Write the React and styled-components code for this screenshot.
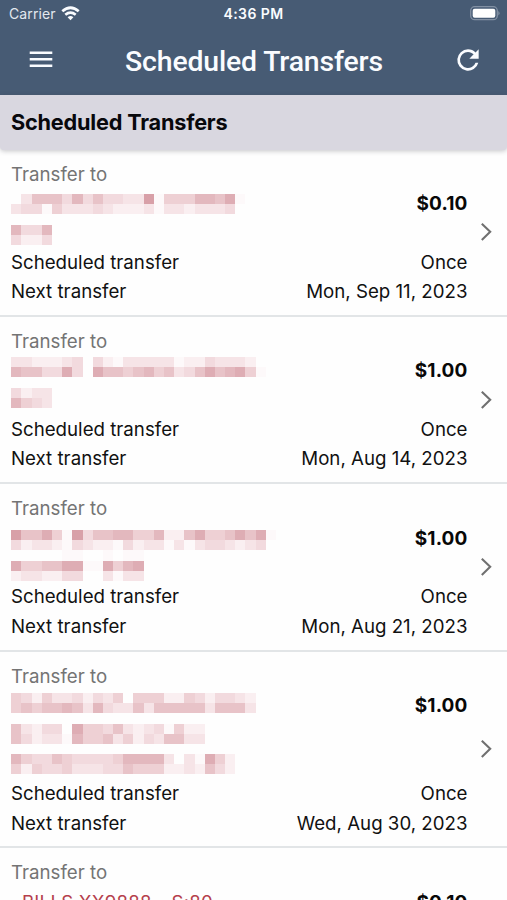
import React from "react";
import styled, { createGlobalStyle } from "styled-components";

const GlobalStyle = createGlobalStyle`
  * { box-sizing: border-box; }
  html, body { margin: 0; padding: 0; background: #fefefe; overflow: hidden; }
  body { font-family: Inter, "Liberation Sans", sans-serif; color: #111; }
`;

const Screen = styled.div`
  width: 507px;
  height: 900px;
  overflow: hidden;
  background: #fefefe;
`;

const Header = styled.header`
  height: 95px;
  background: #475b74;
  color: #fafcff;
`;

const StatusBar = styled.div`
  height: 27px;
  padding: 0 7px 0 9px;
  display: grid;
  grid-template-columns: 1fr auto 1fr;
  align-items: center;
`;

const Carrier = styled.div`
  display: flex;
  align-items: center;
  gap: 5px;
  font-size: 14px;
  letter-spacing: 0.1px;
  color: #e3e8ef;
`;

const Clock = styled.div`
  margin-right: 2px;
  font-size: 14px;
  font-weight: 600;
  letter-spacing: 0.4px;
`;

const BatterySlot = styled.div`
  display: flex;
  justify-content: flex-end;
`;

const TitleBar = styled.div`
  height: 66px;
  display: grid;
  grid-template-columns: 81px 1fr 78px;
  align-items: start;
`;

const IconButton = styled.button`
  border: 0;
  padding: 0;
  background: none;
  height: 66px;
  display: flex;
  align-items: center;
  justify-content: center;
  color: inherit;
`;

const Title = styled.h1`
  margin: 0 2px 0 0;
  text-align: center;
  font: 500 28.4px/70px Roboto, sans-serif;
  letter-spacing: -0.15px;
  white-space: nowrap;
`;

const SectionHeading = styled.h2`
  position: relative;
  margin: 0;
  height: 54.5px;
  padding-left: 11px;
  background: #d9d7e0;
  border-radius: 0 0 4px 4px;
  box-shadow: 0 1px 5px rgba(60, 60, 70, 0.3);
  font-size: 21.7px;
  line-height: 55px;
  font-weight: 700;
  letter-spacing: -0.2px;
  color: #08080c;
`;

const Row = styled.article`
  display: grid;
  grid-template-columns: 1fr 39.5px;
  align-items: center;
  padding: 10px 0 8.4px 11px;
  border-bottom: 2px solid #e2e5e7;
`;

const Line = styled.div`
  display: flex;
  justify-content: space-between;
  height: 29.4px;
  font-size: 18.7px;
  line-height: 29.4px;
  white-space: nowrap;
`;

const Caption = styled(Line)`
  color: #747474;
`;

const PayeeBlock = styled.div`
  display: flex;
  justify-content: space-between;
  align-items: flex-start;
  height: ${(p) => p.$lines * 29.4}px;
  line-height: 29.4px;
`;

const Payee = styled.span`
  font-size: 18.6px;
  letter-spacing: 0.25px;
  color: #b5404c;
  white-space: pre;
`;

const Amount = styled.strong`
  font-size: 19px;
  font-weight: 700;
  letter-spacing: 0.15px;
  color: #080808;
`;

const MosaicSvg = styled.svg`
  display: block;
  overflow: visible;
  margin-top: ${(p) => p.$top}px;
`;

const Chevron = styled.svg`
  display: block;
  margin: -1.6px 0 0 12px;
`;

const shades = ["none", "#fdf9fa", "#faeff1", "#f6e4e7", "#f2dade", "#eed0d4", "#e8c3c8", "#e3b8be", "#deadb4", "#d8a0a8"];
const cell = 10.18;

function Mosaic({ rows, top }) {
  return (
    <MosaicSvg $top={top} width="260" height="20" shapeRendering="crispEdges" aria-hidden="true">
      {rows.flatMap((row, y) =>
        [...row].map((level, x) =>
          level === "0" ? null : (
            <rect key={`${x}-${y}`} x={0.3 + x * cell} y={y * cell} width={cell} height={cell} fill={shades[+level]} />
          )
        )
      )}
    </MosaicSvg>
  );
}

const transfers = [
  {
    amount: "$0.10", date: "Mon, Sep 11, 2023", lines: 2, top: 5.1,
    mosaic: ["03666474644339155577681", "3441533343222313323334", "0", "7447", "4224"],
  },
  {
    amount: "$1.00", date: "Mon, Aug 14, 2023", lines: 2, top: 1,
    mosaic: ["332223404213333312243332", "7664484086656756346867851", "0", "4233", "7543"],
  },
  {
    amount: "$1.00", date: "Mon, Aug 21, 2023", lines: 2, top: 6.7,
    mosaic: ["96685194667755722685568681", "4233214322142331313443234", "0000011001011", "8556688118578", "2332244003133"],
  },
  {
    amount: "$1.00", date: "Wed, Aug 30, 2023", lines: 3, top: 2.2,
    mosaic: ["542533424350555225424432", "565667637433636666636663", "0", "6324408554632341522", "6423317556352436633", "0", "7544654444577773031852", "5254453334465552232642"],
  },
  { amount: "$0.10", date: "Fri, Sep 1, 2023", lines: 2, payee: "  BILLS XX9888 - S:80" },
];

function Transfer({ item }) {
  return (
    <Row>
      <div>
        <Caption>Transfer to</Caption>
        <PayeeBlock $lines={item.lines}>
          {item.payee ? <Payee>{item.payee}</Payee> : <Mosaic rows={item.mosaic} top={item.top} />}
          <Amount>{item.amount}</Amount>
        </PayeeBlock>
        <Line><span>Scheduled transfer</span><span>Once</span></Line>
        <Line><span>Next transfer</span><span>{item.date}</span></Line>
      </div>
      <Chevron width="14" height="20" viewBox="0 0 14 20" fill="none" stroke="#707070" strokeWidth="2.1">
        <path d="M1.8 1.7 10.2 9.8 1.8 18" />
      </Chevron>
    </Row>
  );
}

export default function App() {
  return (
    <Screen>
      <GlobalStyle />
      <Header>
        <StatusBar>
          <Carrier>
            Carrier
            <svg width="19" height="15" viewBox="0 0 19 15" fill="none" stroke="#fafcff" strokeWidth="2.7">
              <path d="M1.3 5.3Q9.5-1.8 17.7 5.3" />
              <path d="M4.3 8.7Q9.5 4.5 14.7 8.7" />
              <path d="M6.6 11.2Q9.5 8.8 12.4 11.2L9.5 14.2Z" fill="#fafcff" stroke="none" />
            </svg>
          </Carrier>
          <Clock>4:36 PM</Clock>
          <BatterySlot>
            <svg width="30" height="15" viewBox="0 0 30 15">
              <rect x=".7" y=".7" width="26.6" height="13" rx="4" fill="none" stroke="#8290a3" strokeWidth="1.3" />
              <rect x="2.7" y="2.7" width="22.6" height="9" rx="2" fill="#fff" />
              <path d="M28.5 5q1.8 2.2 0 4.5z" fill="#9aa6b5" />
            </svg>
          </BatterySlot>
        </StatusBar>
        <TitleBar>
          <IconButton aria-label="Menu">
            <svg width="24" height="18" viewBox="0 0 24 18" fill="currentColor">
              <path d="M.7 .6h22.6v2.5H.7zM.7 7h22.6v2.5H.7zM.7 13.4h22.6v2.5H.7z" />
            </svg>
          </IconButton>
          <Title>Scheduled Transfers</Title>
          <IconButton aria-label="Refresh">
            <svg width="32" height="32" viewBox="0 0 24 24" fill="currentColor">
              <path d="M17.65 6.35A7.96 7.96 0 0 0 12 4a8 8 0 1 0 7.73 10h-2.08A6 6 0 1 1 12 6c1.66 0 3.14.69 4.22 1.78L13 11h7V4z" />
            </svg>
          </IconButton>
        </TitleBar>
      </Header>
      <SectionHeading>Scheduled Transfers</SectionHeading>
      <main>
        {transfers.map((item, i) => <Transfer key={i} item={item} />)}
      </main>
    </Screen>
  );
}
